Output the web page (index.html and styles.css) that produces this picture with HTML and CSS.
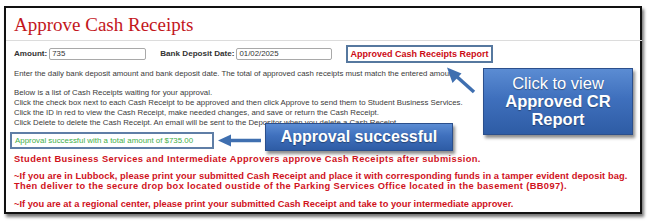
FILE: index.html
```html
<!DOCTYPE html>
<html>
<head>
<meta charset="utf-8">
<link rel="stylesheet" href="styles.css">
</head>
<body>
<div class="frame">
  <h1 class="title">Approve Cash Receipts</h1>
  <div class="form-row">
    <label class="lbl">Amount:</label>
    <div class="input amount">735</div>
    <label class="lbl date-lbl">Bank Deposit Date:</label>
    <div class="input date">01/02/2025</div>
    <a class="report-link">Approved Cash Receipts Report</a>
  </div>
  <p class="info first">Enter the daily bank deposit amount and bank deposit date. The total of approved cash receipts must match the entered amount.</p>
  <div class="info-block">
    <p class="info">Below is a list of Cash Receipts waiting for your approval.</p>
    <p class="info">Click the check box next to each Cash Receipt to be approved and then click Approve to send them to Student Business Services.</p>
    <p class="info">Click the ID in red to view the Cash Receipt, make needed changes, and save or return the Cash Receipt.</p>
    <p class="info">Click Delete to delete the Cash Receipt. An email will be sent to the Depositor when you delete a Cash Receipt.</p>
  </div>
  <div class="success">Approval successful with a total amount of $735.00</div>
  <p class="notice n1">Student Business Services and Intermediate Approvers approve Cash Receipts after submission.</p>
  <div class="notice-pair">
    <p class="notice n2a">~If you are in Lubbock, please print your submitted Cash Receipt and place it with corresponding funds in a tamper evident deposit bag.</p>
    <p class="notice n2b">Then deliver to the secure drop box located oustide of the Parking Services Office located in the basement (BB097).</p>
  </div>
  <p class="notice n3">~If you are at a regional center, please print your submitted Cash Receipt and take to your intermediate approver.</p>

  <div class="callout callout-report">
    <span class="cl-normal">Click to view</span>
    <span class="cl-bold">Approved CR</span>
    <span class="cl-bold">Report</span>
  </div>
  <div class="callout callout-success">Approval successful</div>
</div>
<svg class="arrows" width="649" height="224" viewBox="0 0 649 224">
  <g fill="#3f6fb0" stroke="#3f6fb0">
    <line x1="261" y1="140.5" x2="228" y2="140.5" stroke-width="3.5"/>
    <polygon points="218,140.5 231,134.5 231,146.5" stroke="none"/>
    <line x1="474" y1="92" x2="455" y2="75" stroke-width="3.5"/>
    <polygon points="447,67.5 461.5,73.5 452.5,83" stroke="none"/>
  </g>
</svg>
</body>
</html>
```

FILE: styles.css
```css
* { box-sizing: border-box; }
html, body { margin: 0; padding: 0; background: #fff; }
body { position: relative; width: 649px; height: 224px; overflow: hidden; padding-top: 6px; padding-left: 4px; }

.frame {
  position: relative;
  width: 638px;
  height: 208px;
  border: 2px solid #111;
  box-shadow: 2px 3px 3px rgba(0,0,0,0.55);
  background: #fff;
  padding-left: 8px;
  font-family: "Liberation Sans", Arial, sans-serif;
}

.title {
  margin: 0 0 0 -8px;
  padding: 2px 0 0 8px;
  height: 33px;
  border-bottom: 1px solid #dcdcdc;
  font-family: "Liberation Serif", "Times New Roman", serif;
  font-weight: normal;
  font-size: 19px;
  line-height: 30px;
  color: #c3161c;
  width: 636px;
}

.form-row {
  display: flex;
  align-items: center;
  height: 19px;
  margin-top: 3px;
}
.lbl { font-weight: bold; font-size: 8.1px; color: #333; }
.input {
  height: 12px;
  border: 1px solid #a9a9a9;
  border-radius: 2px;
  font-size: 7.8px;
  line-height: 10px;
  padding-left: 2px;
  color: #333;
}
.amount { width: 97px; margin-left: 2px; }
.date-lbl { margin-left: 14px; }
.date { width: 96px; margin-left: 2px; }
.report-link {
  margin-left: 14px;
  height: 18px;
  border: 2px solid #56789f;
  padding: 0 2px;
  color: #cc0a14;
  font-weight: bold;
  font-size: 9px;
  line-height: 14px;
  white-space: nowrap;
}

.info {
  margin: 0;
  font-size: 7.8px;
  line-height: 10px;
  color: #3a3a3a;
  white-space: nowrap;
}
.info.first { margin-top: 6px; }
.info-block { margin-top: 9px; }

.success {
  margin: 4px 0 0 -4px;
  width: 204px;
  height: 17px;
  border: 2px solid #5f7ea6;
  padding-left: 3px;
  font-size: 7.9px;
  line-height: 13px;
  color: #3fae49;
  white-space: nowrap;
}

.notice {
  margin: 0;
  color: #d0121c;
  font-weight: bold;
  font-size: 9.3px;
  line-height: 9.5px;
  white-space: nowrap;
}
.n1 { margin-top: 5px; line-height: 10px; letter-spacing: 0.4px; }
.notice-pair { margin-top: 8px; }
.n2a { letter-spacing: 0.08px; }
.n2b { letter-spacing: 0.36px; }
.n3 { margin-top: 9px; }

.callout {
  position: absolute;
  background: linear-gradient(180deg, #5b8cd3 0%, #3f70bd 45%, #2e5ca5 100%);
  border: 1px solid #2b4f8c;
  box-shadow: 2px 3px 3px rgba(0,0,0,0.45);
  color: #fff;
  text-align: center;
  text-shadow: 0 1px 1px rgba(0,0,0,0.35);
}
.callout-report {
  left: 477px;
  top: 60px;
  width: 150px;
  height: 67px;
  padding-top: 5px;
  display: flex;
  flex-direction: column;
  font-size: 16.5px;
  line-height: 18px;
}
.cl-bold { font-weight: bold; }
.callout-success {
  left: 259px;
  top: 115px;
  width: 188px;
  height: 28px;
  font-weight: bold;
  font-size: 16px;
  line-height: 26px;
}

.arrows { position: absolute; left: 0; top: 0; pointer-events: none; }
```
